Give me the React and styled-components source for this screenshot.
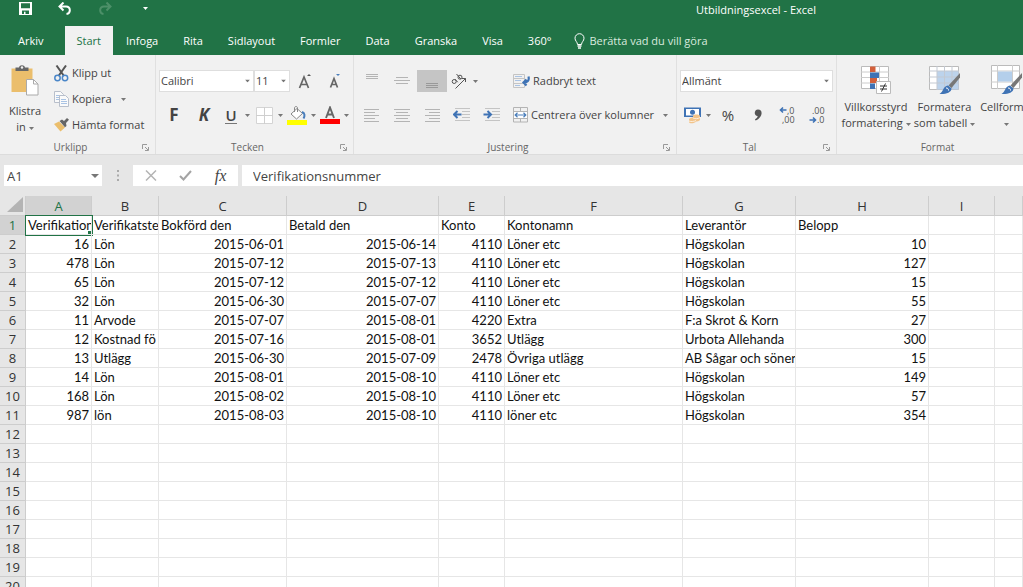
import React, { useState } from 'react';
import styled, { createGlobalStyle } from 'styled-components';

const GlobalStyle = createGlobalStyle`
  * {
    box-sizing: border-box;
  }

  body {
    margin: 0;
    background: #fff;
    font-family: 'Open Sans', 'Noto Sans', sans-serif;
    font-size: 11px;
    line-height: 16px;
    color: #444;
  }

  button, input, select {
    font: inherit;
    color: inherit;
    margin: 0;
    padding: 0;
    border: none;
    background: none;
    border-radius: 0;
    outline: none;
  }
`;

const Page = styled.div`
  display: flex;
  flex-direction: column;
  height: 100vh;
  overflow: hidden;
`;

const TitleBar = styled.header`
  display: flex;
  flex: none;
  align-items: flex-start;
  height: 26px;
  padding-left: 5px;
  background: #217346;
  color: #fff;
`;

const QuickButton = styled.button`
  display: flex;
  align-items: center;
  justify-content: center;
  width: 40px;
  height: 16px;
`;

const Title = styled.h1`
  margin: 2px 207px 0 auto;
  font-size: 11px;
  line-height: 16px;
  font-weight: 400;
`;

const TabBar = styled.nav`
  display: flex;
  flex: none;
  gap: 1px;
  height: 29px;
  padding-left: 6px;
  background: #217346;
  color: #fff;
`;

const Tab = styled.button`
  padding: 0 12px;
  background: ${props => (props.$active ? '#f1f1f1' : 'transparent')};
  color: ${props => (props.$active ? '#217346' : '#fff')};
  margin-right: ${props => (props.$file ? '8px' : '0')};
`;

const TellMe = styled.button`
  display: flex;
  align-items: center;
  gap: 4px;
  padding-left: 10px;
  color: #d9eadf;
`;

const Ribbon = styled.div`
  display: flex;
  flex: none;
  height: 100px;
  background: #f1f1f1;
  border-bottom: 1px solid #dcdcdc;
  overflow: hidden;
`;

const Group = styled.section`
  display: flex;
  flex-direction: column;
  flex: none;
  width: ${props => props.$width};
  padding: 5px 3px 0;
  border-right: 1px solid #e0e0e0;
`;

const GroupBody = styled.div`
  display: flex;
  flex: 1;
`;

const GroupFooter = styled.div`
  display: flex;
  align-items: center;
  height: 14px;
  color: #666;
  font-size: 10px;
  line-height: 14px;
`;

const GroupName = styled.span`
  flex: 1;
  text-align: center;
`;

const Launcher = styled.button`
  display: flex;
  justify-content: center;
  width: 14px;
`;

const BigButton = styled.button`
  display: flex;
  flex-direction: column;
  align-items: center;
  width: ${props => props.$width};
  padding-top: 5px;
  gap: ${props => props.$gap || '4px'};
  flex: none;
`;

const BigLabel = styled.span`
  white-space: nowrap;

  svg {
    vertical-align: middle;
  }
`;

const Stack = styled.div`
  display: flex;
  flex-direction: column;
  padding-left: 7px;
`;

const TextButton = styled.button`
  display: flex;
  align-items: center;
  gap: 3px;
  height: ${props => props.$height};
  white-space: nowrap;
`;

const ButtonArrow = styled.span`
  display: flex;
  padding-left: 6px;
`;

const Rows = styled.div`
  display: flex;
  flex-direction: column;
  flex: 1;
  gap: 12px;
  padding-top: 10px;
`;

const Row = styled.div`
  display: flex;
  align-items: center;
  height: 22px;
`;

const WrapColumn = styled(Rows)`
  padding-left: 6px;
`;

const AlignRows = styled(Rows)`
  flex: none;
  width: 150px;
`;

const ToolButton = styled.button`
  display: flex;
  align-items: center;
  justify-content: center;
  width: 30px;
  height: 22px;
  background: ${props => (props.$pressed ? '#c5c5c5' : 'transparent')};
`;

const Split = styled.button`
  display: flex;
  align-items: center;
  height: 22px;
`;

const SplitIcon = styled.span`
  display: flex;
  justify-content: center;
  width: 24px;
`;

const SplitArrow = styled.span`
  display: flex;
  justify-content: center;
  width: 9px;
`;

const Letter = styled.span`
  font-size: 17px;
  line-height: 20px;
  font-weight: 700;
  font-style: ${props => (props.$italic ? 'italic' : 'normal')};
`;

const Underlined = styled.span`
  font-size: 15px;
  line-height: 16px;
  font-weight: 600;
  border-bottom: 1px solid #777;
`;

const Percent = styled.span`
  font-size: 15px;
`;

const ComboBox = styled.label`
  position: relative;
  display: flex;
  width: ${props => props.$width};
  height: 22px;
  background: #fff;
  border: 1px solid #dedede;

  select {
    appearance: none;
    width: 100%;
    padding-left: 1px;
  }

  svg {
    position: absolute;
    right: 3px;
    top: 50%;
    transform: translateY(-50%);
    pointer-events: none;
  }
`;

const NameBox = styled(ComboBox)`
  height: 21px;
  border: none;

  input {
    width: 100%;
    padding-left: 3px;
    font-size: 13px;
  }
`;

const FormulaBar = styled.div`
  display: flex;
  flex: none;
  align-items: center;
  height: 41px;
  padding-left: 4px;
  background: #e6e6e6;
`;

const Dots = styled.span`
  display: flex;
  justify-content: center;
  width: 31px;
`;

const FormulaButtons = styled.div`
  display: flex;
  height: 21px;
  margin-right: 4px;
  background: #fff;
`;

const FormulaButton = styled.button`
  display: flex;
  align-items: center;
  justify-content: center;
  width: 35px;
`;

const Fx = styled.span`
  font-family: 'Liberation Serif', serif;
  font-style: italic;
  font-size: 16px;
`;

const FormulaInput = styled.input`
  flex: 1;
  height: 21px;
  padding-left: 11px;
  background: #fff;
  font-size: 13px;
`;

const Sheet = styled.table`
  width: 100%;
  table-layout: fixed;
  border-collapse: separate;
  border-spacing: 0;
  font-family: Lato, sans-serif;
  font-size: 13px;
  color: #111;
`;

const HeadCell = styled.th`
  height: ${props => (props.scope === 'col' ? '20px' : '19px')};
  padding: 0;
  font-family: 'Open Sans', sans-serif;
  font-size: 13px;
  line-height: 18px;
  font-weight: 400;
  text-align: center;
  color: ${props => (props.$active ? '#217346' : '#333')};
  background: ${props => (props.$active ? '#d2d2d2' : '#e6e6e6')};
  border-right: 1px solid #cdcdcd;
  border-bottom: 1px solid #cdcdcd;
`;

const Corner = styled.td`
  padding: 0 2px 2px 0;
  background: #e6e6e6;
  border-right: 1px solid #cdcdcd;
  border-bottom: 1px solid #cdcdcd;

  svg {
    display: block;
    margin: 0 0 0 auto;
  }
`;

const Cell = styled.td`
  position: relative;
  height: 19px;
  padding: 0 2px;
  line-height: 18px;
  white-space: nowrap;
  overflow: hidden;
  text-align: ${props => (props.$number ? 'right' : 'left')};
  border-right: 1px solid #e6e6e6;
  border-bottom: 1px solid #e6e6e6;
  outline: ${props => (props.$selected ? '1px solid #217346' : 'none')};
`;

const FillHandle = styled.span`
  position: absolute;
  right: 0;
  bottom: 0;
  width: 3px;
  height: 3px;
  background: #217346;
`;

const Arrow = ({ color = '#777' }) => (
  <svg width="5" height="3" viewBox="0 0 5 3"><path d="M0 0h5L2.5 3z" fill={color} /></svg>
);

const WideArrow = () => (
  <svg width="8" height="4" viewBox="0 0 8 4"><path d="M0 0h8L4 4z" fill="#777" /></svg>
);

const SaveIcon = () => (
  <svg width="13" height="13" viewBox="0 0 13 13">
    <path fillRule="evenodd" d="M0 0h13v13H0zM2 1.200v5h9v-5zM3 8.500v3.500h2V9.800h1.500V12H10V8.500z" fill="#fff" />
  </svg>
);

const UndoIcon = ({ color, flip }) => (
  <svg width="14" height="13" viewBox="0 0 14 13">
    <path
      d="M5.500 0.500L1.500 4.500l4 4M2 4.500h6c5 0 5 7 0.500 7.500"
      transform={flip ? 'matrix(-1 0 0 1 14 0)' : undefined}
      fill="none" stroke={color} strokeWidth="2"
    />
  </svg>
);

const BulbIcon = () => (
  <svg width="11" height="16" viewBox="0 0 11 16" fill="none" stroke="#fff">
    <path d="M3.500 11.500C3.500 9 1 8 1 5.200a4.500 4.500 0 0 1 9 0C10 8 7.500 9 7.500 11.500z" />
    <path d="M3.500 13h4M4 15h3" strokeWidth="1.400" />
  </svg>
);

const LauncherIcon = () => (
  <svg width="7" height="7" viewBox="0 0 7 7" fill="none" stroke="#999">
    <path d="M0.500 5V0.500H5M3 3l3 3" />
    <path d="M6.500 3v3.500H3" />
  </svg>
);

const PasteIcon = () => (
  <svg width="28" height="31" viewBox="0 0 28 31">
    <path d="M0.500 3.500h21V27H0.500z" fill="#ebbe6c" />
    <path d="M4.500 2.500H8C8.500-.5 13.500-.5 14 2.500h3.500V6h-13z" fill="#666" />
    <circle cx="11" cy="2.500" r="1.200" fill="#f1f1f1" />
    <path d="M15.500 14.500h7l4.500 4.500v11H15.500z" fill="#fff" stroke="#aaa" />
    <path d="M22.500 14.500V19H27" fill="none" stroke="#aaa" />
  </svg>
);

const CutIcon = () => (
  <svg width="15" height="17" viewBox="0 0 15 17" fill="none">
    <path d="M2.500 0.500L10 11M12 0.500L4.500 11" stroke="#555" strokeWidth="2" />
    <circle cx="3.500" cy="13" r="2.700" stroke="#4a86c8" strokeWidth="1.500" />
    <circle cx="11" cy="13" r="2.700" stroke="#4a86c8" strokeWidth="1.500" />
  </svg>
);

const CopyIcon = () => (
  <svg width="15" height="16" viewBox="0 0 15 16" fill="#fafafa" stroke="#b8bfcb">
    <path d="M0.500 0.500h6l3 3v8h-9z" />
    <path d="M2 4.500h4M2 6.500h4M2 8.500h4" stroke="#a9c3e4" />
    <path d="M5.500 4.500h6l3 3v8h-9z" />
    <path d="M7 8.500h5M7 10.500h6M7 12.500h6" stroke="#a9c3e4" />
  </svg>
);

const BrushIcon = () => (
  <svg width="15" height="14" viewBox="0 0 15 14">
    <path d="M0 6l5-2.500 6 6L6.500 13.500z" fill="#ebbe6c" />
    <path d="M5.500 3L8 1.500l2 1.500L13 0l2 1.800L12 5l0.500 3-1.500 1.200z" fill="#666" />
  </svg>
);

const GrowFontIcon = ({ shrink }) => (
  <svg width="14" height="17" viewBox="0 0 14 17">
    <path d={shrink ? 'M2.500 14.500L6 5.500l3.500 9M3.800 11.500h4.500' : 'M1.500 15L6 4l4.500 11M3 11.500h6'} fill="none" stroke="#666" strokeWidth="1.700" />
    <path d={shrink ? 'M8 1h4l-2 2z' : 'M9 3h4l-2-2z'} fill={shrink ? '#4a7ebb' : '#555'} />
  </svg>
);

const BordersIcon = () => (
  <svg width="17" height="17" viewBox="0 0 17 17">
    <path d="M0.500 0.500h16v16H0.500z" fill="#fff" stroke="#d4d4d4" />
    <path d="M8.500 0v17M0 8.500h17" stroke="#cfcfcf" />
  </svg>
);

const FillIcon = () => (
  <svg width="20" height="19" viewBox="0 0 20 19">
    <path d="M4 8l6-5.500 5.500 5-6 5.500z" fill="#fff" stroke="#888" />
    <path d="M7.500 6V2c0-2 3-2 3 0v4" fill="none" stroke="#888" />
    <path d="M15 6c3 1 3 4 1.500 6.500" fill="none" stroke="#4a7ebb" strokeWidth="2" />
    <path d="M0 14h20v5H0z" fill="#ff0" />
  </svg>
);

const FontColorIcon = () => (
  <svg width="20" height="18" viewBox="0 0 20 18">
    <path d="M6 12l4-10.500L14 12M7.300 8.500h5.400" fill="none" stroke="#666" strokeWidth="1.900" />
    <path d="M0 13h20v5H0z" fill="#f00" />
  </svg>
);

// lines: [x, y, length] for each stroke of the alignment icons
const LinesIcon = ({ lines, color = '#b4b4b4' }) => (
  <svg width="16" height="16" viewBox="0 0 16 16" stroke={color}>
    {lines.map(([x, y, w]) => <path key={y} d={`M${x} ${y + 0.5}h${w}`} />)}
  </svg>
);

const OrientationIcon = () => (
  <svg width="16" height="16" viewBox="0 0 16 16" fill="none" stroke="#555">
    <path d="M4.500 15.500L14.500 5.500M11 5.500h3.500V9" />
    <circle cx="3.200" cy="8.500" r="2" />
    <path d="M3.800 6l3 3.200M5.500 1l4.300 5" />
    <circle cx="9" cy="4.200" r="2" />
  </svg>
);

const IndentIcon = ({ right }) => (
  <svg width="18" height="14" viewBox="0 0 18 14">
    <path d="M2 0.500h15M9 3.500h8M9 6.500h8M9 9.500h8M2 12.500h15" stroke="#c4c4c4" />
    <path d={right ? 'M0.500 6.500h7M4.500 3l3.500 3.500L4.500 10' : 'M8.500 6.500h-7M4.500 3L1 6.500 4.500 10'} fill="none" stroke="#3f73b5" strokeWidth="2" />
  </svg>
);

const WrapIcon = () => (
  <svg width="17" height="15" viewBox="0 0 17 15" fill="none">
    <path d="M0.500 0.500h11v13H0.500zM0 4.500h12M0 9.500h12" stroke="#c4c4c4" />
    <path d="M2 2.500h7M2 6.500h6M2 11.500h5" stroke="#a9c3e4" />
    <path d="M15.500 2.500c1 4-1 6-5 6M13.500 5.500L10.500 8.500l3 3" stroke="#3f73b5" strokeWidth="2.200" />
  </svg>
);

const MergeIcon = () => (
  <svg width="15" height="16" viewBox="0 0 15 16" fill="none">
    <path d="M0.500 0.500h14v14.500H0.500zM7.500 0v4M7.500 12v3M0 4.500h15M0 11.500h15" stroke="#b4b4b4" />
    <path d="M1 5h13v6H1z" fill="#fff" />
    <path d="M2 8h11M4.500 5.800L2.200 8l2.300 2.200M10.500 5.800L12.800 8l-2.300 2.200" stroke="#4a7ebb" strokeWidth="1.200" />
  </svg>
);

const MoneyIcon = () => (
  <svg width="17" height="17" viewBox="0 0 17 17">
    <path d="M0 0.500h17v9.500H0z" fill="#3f73b5" />
    <path d="M2 2h13v6.500H2z" fill="#fff" />
    <circle cx="8.500" cy="5.200" r="2.500" fill="#3f73b5" />
    <path d="M9 9c0-2 7-2 7 0v4c-1 1-3 1.500-4 1.500-1 2-7 2.500-7 .5v-3c1-1 3-1.500 4-1.500z" fill="#f2c48b" />
    <path d="M9 11c2 1 5 1 7-.5M5 14c2 1 5 .5 7-.5" fill="none" stroke="#fff" strokeWidth=".7" />
  </svg>
);

const CommaIcon = () => (
  <svg width="8" height="12" viewBox="0 0 8 12">
    <path d="M4 0.500c6 0 4 9-2.500 11L1 10.200c1.800-.8 2.600-1.700 2.600-3.200C-.5 7 0 .5 4 .5z" fill="#555" />
  </svg>
);

const DecimalIcon = ({ decrease }) => (
  <svg width="18" height="20" viewBox="0 0 18 20" fontFamily="Open Sans, sans-serif" fontSize="9" fill="#555">
    <text x={decrease ? 3 : 8} y="9">{decrease ? '.00' : ',0'}</text>
    <text x={decrease ? 8 : 3} y="18">{decrease ? '.0' : ',00'}</text>
    <path
      d={decrease ? 'M0.500 15h6M4 12.500L6.500 15 4 17.500' : 'M7.500 5h-6M4 2.500L1.500 5 4 7.500'}
      fill="none" stroke="#3f73b5" strokeWidth="1.600"
    />
  </svg>
);

const ConditionalIcon = () => (
  <svg width="30" height="30" viewBox="0 0 30 30">
    <path d="M0.500 1.500h27v22H0.500z" fill="#fff" stroke="#bbb" />
    <path d="M0 7h28M0 12.500h28M0 18h28M9.500 1v23M18.500 1v23" stroke="#ccc" />
    <path d="M9 1.500h5.500V7H9zM9 13h7v5H9z" fill="#d3603b" />
    <path d="M9 7.500h9V13H9zM9 18.500h5V24H9z" fill="#3f73b5" />
    <path d="M15.500 16.500h14v12h-14z" fill="#fff" stroke="#bbb" />
    <path d="M19 21h7M19 24h7M24.500 18.500l-4 8" stroke="#333" />
  </svg>
);

const StyleBrush = () => (
  <>
    <path d="M31 8v4.500L22.500 23l-3-2.500z" fill="#777" />
    <path d="M19 20.500l3.500 3c0 4-6 6-12 5.500 4-2 3-7.500 8.500-8.500z" fill="#3f73b5" />
    <path d="M17 23c2 0 2.500 1 2.500 2.500" fill="none" stroke="#fff" />
  </>
);

const TableStyleIcon = () => (
  <svg width="32" height="30" viewBox="0 0 32 30">
    <path d="M0.500 1.500h29v23H0.500z" fill="#fff" stroke="#bbb" />
    <path d="M8 6h21.500v18.500H8z" fill="#bcd3ec" />
    <path d="M0 6h30M0 12h30M0 18h30M8 1v24M15.500 1v24M23 1v24" stroke="#c3c9d2" />
    <StyleBrush />
  </svg>
);

const CellStyleIcon = () => (
  <svg width="32" height="30" viewBox="0 0 32 30">
    <path d="M0.500 0.500h28v23H0.500z" fill="#fff" stroke="#bbb" />
    <path d="M0 6h29M0 17h29M6.500 0v24M21.500 0v24" stroke="#ccc" />
    <path d="M7 6.500h14v10H7z" fill="#b4cfeb" />
    <StyleBrush />
  </svg>
);

const CancelIcon = () => (
  <svg width="12" height="11" viewBox="0 0 12 11"><path d="M1 0.500l10 10M11 0.500l-10 10" stroke="#b4b4b4" strokeWidth="1.500" /></svg>
);

const CheckIcon = () => (
  <svg width="13" height="11" viewBox="0 0 13 11"><path d="M1 6l3.500 3.500L12 1" fill="none" stroke="#a4a4a4" strokeWidth="2" /></svg>
);

const tabs = ['Infoga', 'Rita', 'Sidlayout', 'Formler', 'Data', 'Granska', 'Visa', '360°'];

const columns = [
  ['A', 66], ['B', 67], ['C', 128], ['D', 152], ['E', 66],
  ['F', 178], ['G', 113], ['H', 133], ['I', 66],
];

const sheetRows = [
  ['Verifikationsnummer', 'Verifikatstext', 'Bokförd den', 'Betald den', 'Konto', 'Kontonamn', 'Leverantör', 'Belopp'],
  [16, 'Lön', '2015-06-01', '2015-06-14', 4110, 'Löner etc', 'Högskolan', 10],
  [478, 'Lön', '2015-07-12', '2015-07-13', 4110, 'Löner etc', 'Högskolan', 127],
  [65, 'Lön', '2015-07-12', '2015-07-12', 4110, 'Löner etc', 'Högskolan', 15],
  [32, 'Lön', '2015-06-30', '2015-07-07', 4110, 'Löner etc', 'Högskolan', 55],
  [11, 'Arvode', '2015-07-07', '2015-08-01', 4220, 'Extra', 'F:a Skrot & Korn', 27],
  [12, 'Kostnad fö', '2015-07-16', '2015-08-01', 3652, 'Utlägg', 'Urbota Allehanda', 300],
  [13, 'Utlägg', '2015-06-30', '2015-07-09', 2478, 'Övriga utlägg', 'AB Sågar och söner', 15],
  [14, 'Lön', '2015-08-01', '2015-08-10', 4110, 'Löner etc', 'Högskolan', 149],
  [168, 'Lön', '2015-08-02', '2015-08-10', 4110, 'Löner etc', 'Högskolan', 57],
  [987, 'lön', '2015-08-03', '2015-08-10', 4110, 'löner etc', 'Högskolan', 354],
];

const ROW_COUNT = 20;
const isNumeric = (value) => /^\d/.test(String(value));

const RibbonGroup = ({ name, width, launcher = true, children }) => (
  <Group $width={width}>
    <GroupBody>{children}</GroupBody>
    <GroupFooter>
      <GroupName>{name}</GroupName>
      {launcher && <Launcher aria-label={`${name}, inställningar`}><LauncherIcon /></Launcher>}
    </GroupFooter>
  </Group>
);

const SplitButton = ({ label, children }) => (
  <Split aria-label={label}>
    <SplitIcon>{children}</SplitIcon>
    <SplitArrow><Arrow /></SplitArrow>
  </Split>
);

const Spreadsheet = () => (
  <Sheet>
    <colgroup>
      <col width="26" />
      {columns.map(([name, width]) => <col key={name} width={width} />)}
      <col />
    </colgroup>
    <thead>
      <tr>
        <Corner>
          <svg width="16" height="15" viewBox="0 0 16 15"><path d="M16 0v15H0z" fill="#b4b4b4" /></svg>
        </Corner>
        {columns.map(([name]) => (
          <HeadCell key={name} scope="col" $active={name === 'A'}>{name}</HeadCell>
        ))}
        <HeadCell scope="col" />
      </tr>
    </thead>
    <tbody>
      {Array.from({ length: ROW_COUNT }, (_, r) => (
        <tr key={r}>
          <HeadCell scope="row" $active={r === 0}>{r + 1}</HeadCell>
          {Array.from({ length: columns.length + 1 }, (_, c) => {
            const value = sheetRows[r]?.[c] ?? '';
            const selected = r === 0 && c === 0;
            return (
              <Cell key={c} $number={isNumeric(value)} $selected={selected}>
                {value}
                {selected && <FillHandle />}
              </Cell>
            );
          })}
        </tr>
      ))}
    </tbody>
  </Sheet>
);

const App = () => {
  const [formula, setFormula] = useState('Verifikationsnummer');

  return (
    <Page>
      <GlobalStyle />
      <TitleBar>
        <QuickButton aria-label="Spara"><SaveIcon /></QuickButton>
        <QuickButton aria-label="Ångra"><UndoIcon color="#fff" /></QuickButton>
        <QuickButton aria-label="Gör om"><UndoIcon color="#4d9069" flip /></QuickButton>
        <QuickButton aria-label="Anpassa"><Arrow color="#fff" /></QuickButton>
        <Title>Utbildningsexcel - Excel</Title>
      </TitleBar>

      <TabBar>
        <Tab $file>Arkiv</Tab>
        <Tab $active>Start</Tab>
        {tabs.map(tab => <Tab key={tab}>{tab}</Tab>)}
        <TellMe><BulbIcon />Berätta vad du vill göra</TellMe>
      </TabBar>

      <Ribbon>
        <RibbonGroup name="Urklipp" width="156px">
          <BigButton $width="44px" $gap="7px">
            <PasteIcon />
            <BigLabel>Klistra<br />in <Arrow /></BigLabel>
          </BigButton>
          <Stack>
            <TextButton $height="26px"><CutIcon />Klipp ut</TextButton>
            <TextButton $height="26px"><CopyIcon />Kopiera<ButtonArrow><Arrow /></ButtonArrow></TextButton>
            <TextButton $height="26px"><BrushIcon />Hämta format</TextButton>
          </Stack>
        </RibbonGroup>

        <RibbonGroup name="Tecken" width="198px">
          <Rows>
            <Row>
              <ComboBox $width="95px">
                <select aria-label="Teckensnitt"><option>Calibri</option></select>
                <Arrow />
              </ComboBox>
              <ComboBox $width="36px">
                <select aria-label="Teckenstorlek"><option>11</option></select>
                <Arrow />
              </ComboBox>
              <ToolButton aria-label="Öka teckenstorlek"><GrowFontIcon /></ToolButton>
              <ToolButton aria-label="Minska teckenstorlek"><GrowFontIcon shrink /></ToolButton>
            </Row>
            <Row>
              <ToolButton><Letter>F</Letter></ToolButton>
              <ToolButton><Letter $italic>K</Letter></ToolButton>
              <SplitButton label="Understruken"><Underlined>U</Underlined></SplitButton>
              <SplitButton label="Kantlinjer"><BordersIcon /></SplitButton>
              <SplitButton label="Fyllningsfärg"><FillIcon /></SplitButton>
              <SplitButton label="Teckenfärg"><FontColorIcon /></SplitButton>
            </Row>
          </Rows>
        </RibbonGroup>

        <RibbonGroup name="Justering" width="323px">
          <AlignRows>
            <Row>
              <ToolButton aria-label="Justera överst"><LinesIcon lines={[[2, 1, 12], [2, 3, 12], [2, 5, 12]]} /></ToolButton>
              <ToolButton aria-label="Centrera lodrätt"><LinesIcon lines={[[2, 4, 12], [0, 7, 16], [2, 10, 12]]} /></ToolButton>
              <ToolButton aria-label="Justera nederst" $pressed><LinesIcon color="#999" lines={[[2, 10, 12], [2, 12, 12], [2, 14, 12]]} /></ToolButton>
              <SplitButton label="Orientering"><OrientationIcon /></SplitButton>
            </Row>
            <Row>
              <ToolButton aria-label="Vänsterjustera"><LinesIcon lines={[[0, 2, 15], [0, 5, 11], [0, 8, 15], [0, 11, 11], [0, 14, 15]]} /></ToolButton>
              <ToolButton aria-label="Centrera"><LinesIcon lines={[[0, 2, 16], [2, 5, 12], [0, 8, 16], [2, 11, 12], [0, 14, 16]]} /></ToolButton>
              <ToolButton aria-label="Högerjustera"><LinesIcon lines={[[1, 2, 15], [5, 5, 11], [1, 8, 15], [5, 11, 11], [1, 14, 15]]} /></ToolButton>
              <ToolButton aria-label="Minska indrag"><IndentIcon /></ToolButton>
              <ToolButton aria-label="Öka indrag"><IndentIcon right /></ToolButton>
            </Row>
          </AlignRows>
          <WrapColumn>
            <TextButton $height="22px"><WrapIcon />Radbryt text</TextButton>
            <TextButton $height="22px"><MergeIcon />Centrera över kolumner<ButtonArrow><Arrow /></ButtonArrow></TextButton>
          </WrapColumn>
        </RibbonGroup>

        <RibbonGroup name="Tal" width="160px">
          <Rows>
            <Row>
              <ComboBox $width="153px">
                <select aria-label="Talformat"><option>Allmänt</option></select>
                <Arrow />
              </ComboBox>
            </Row>
            <Row>
              <SplitButton label="Redovisningsformat"><MoneyIcon /></SplitButton>
              <ToolButton><Percent>%</Percent></ToolButton>
              <ToolButton aria-label="Tusentalsavgränsare"><CommaIcon /></ToolButton>
              <ToolButton aria-label="Öka decimal"><DecimalIcon /></ToolButton>
              <ToolButton aria-label="Minska decimal"><DecimalIcon decrease /></ToolButton>
            </Row>
          </Rows>
        </RibbonGroup>

        <RibbonGroup name="Format" width="202px" launcher={false}>
          <BigButton $width="72px">
            <ConditionalIcon />
            <BigLabel>Villkorsstyrd<br />formatering <Arrow /></BigLabel>
          </BigButton>
          <BigButton $width="65px">
            <TableStyleIcon />
            <BigLabel>Formatera<br />som tabell <Arrow /></BigLabel>
          </BigButton>
          <BigButton $width="60px">
            <CellStyleIcon />
            <BigLabel>Cellformat<br /><Arrow /></BigLabel>
          </BigButton>
        </RibbonGroup>
      </Ribbon>

      <FormulaBar>
        <NameBox $width="98px">
          <input aria-label="Namnruta" defaultValue="A1" />
          <WideArrow />
        </NameBox>
        <Dots>
          <svg width="2" height="11" viewBox="0 0 2 11"><path d="M0 0h2v2H0zM0 4.500h2v2H0zM0 9h2v2H0z" fill="#aaa" /></svg>
        </Dots>
        <FormulaButtons>
          <FormulaButton aria-label="Avbryt"><CancelIcon /></FormulaButton>
          <FormulaButton aria-label="Ange"><CheckIcon /></FormulaButton>
          <FormulaButton aria-label="Infoga funktion"><Fx>fx</Fx></FormulaButton>
        </FormulaButtons>
        <FormulaInput aria-label="Formelfält" value={formula} onChange={e => setFormula(e.target.value)} />
      </FormulaBar>

      <Spreadsheet />
    </Page>
  );
};

export default App;
